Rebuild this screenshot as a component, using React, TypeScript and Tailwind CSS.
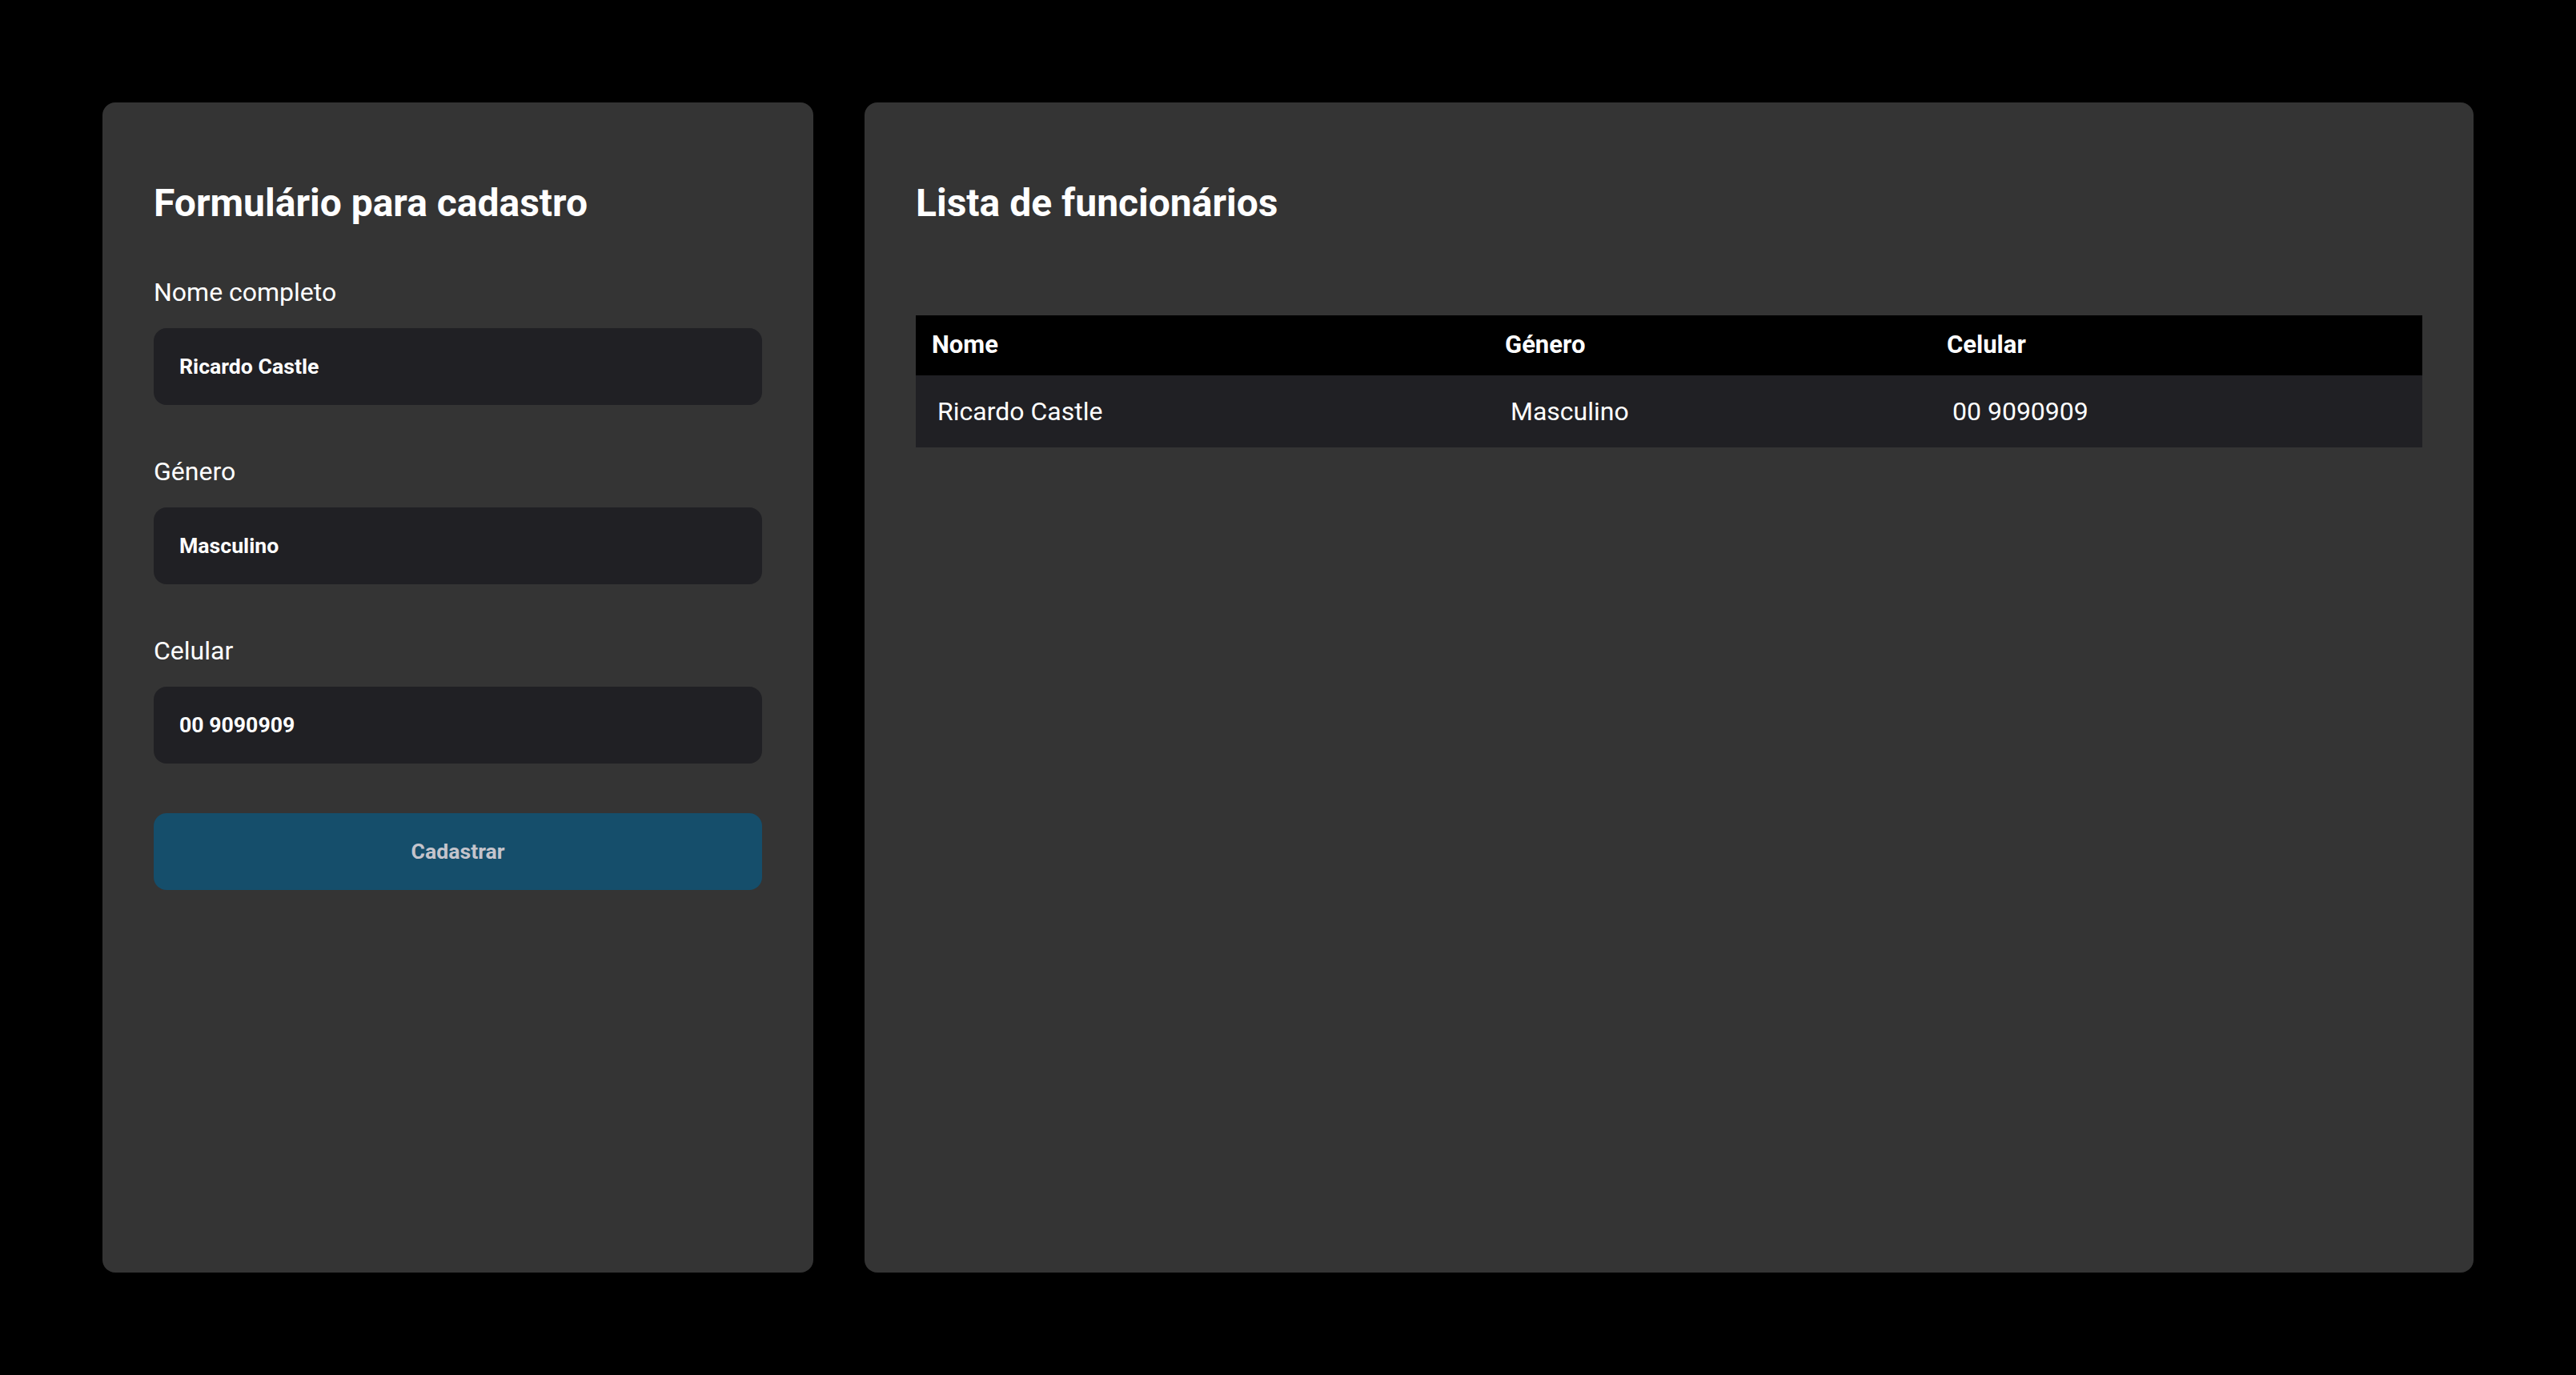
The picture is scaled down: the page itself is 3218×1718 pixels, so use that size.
import React, { useState } from "react";

/* ── Types ─────────────────────────────────────────────────────── */

type Funcionario = {
  nome: string;
  genero: string;
  celular: string;
};

/* ── Field ─────────────────────────────────────────────────────── */

const Field = ({
  label,
  value,
  onChange,
}: {
  label: string;
  value: string;
  onChange: (v: string) => void;
}): JSX.Element => (
  <label className="mt-16 flex flex-col">
    <span className="text-[32px] leading-[38px] text-white">{label}</span>
    <input
      value={value}
      onChange={(e) => onChange(e.target.value)}
      className="mt-[26px] h-[96px] w-full rounded-2xl bg-[#202024] px-8 text-[26.67px] font-bold text-white outline-none"
    />
  </label>
);

/* ── Component ─────────────────────────────────────────────────── */

const App = (): JSX.Element => {
  const [nome, setNome] = useState("Ricardo Castle");
  const [genero, setGenero] = useState("Masculino");
  const [celular, setCelular] = useState("00 9090909");
  const [lista, setLista] = useState<Funcionario[]>([
    { nome: "Ricardo Castle", genero: "Masculino", celular: "00 9090909" },
  ]);

  const handleSubmit = (e: React.FormEvent) => {
    e.preventDefault();
    if (!nome.trim()) return;
    setLista((prev) => [...prev, { nome, genero, celular }]);
  };

  return (
    <main className="flex h-screen gap-16 bg-black p-32 font-['Roboto',sans-serif]">
      {/* ── Formulário ──── */}
      <form
        onSubmit={handleSubmit}
        className="flex w-[888px] shrink-0 flex-col rounded-2xl bg-[#343434] px-16 pt-[98px]"
      >
        <h1 className="text-[48px] font-bold leading-[56px] text-white">
          Formulário para cadastro
        </h1>

        <Field label="Nome completo" value={nome} onChange={setNome} />
        <Field label="Género" value={genero} onChange={setGenero} />
        <Field label="Celular" value={celular} onChange={setCelular} />

        <button
          type="submit"
          className="mt-[62px] h-[96px] w-full rounded-2xl bg-[#154e6b] text-[26.67px] font-bold text-[#c4c4cc]"
        >
          Cadastrar
        </button>
      </form>

      {/* ── Lista ──── */}
      <section className="flex flex-1 flex-col rounded-2xl bg-[#343434] px-16 pt-[98px]">
        <h2 className="text-[48px] font-bold leading-[56px] text-white">
          Lista de funcionários
        </h2>

        <table className="mt-[112px] w-full table-fixed border-collapse text-left text-white">
          <colgroup>
            <col className="w-[716px]" />
            <col className="w-[552px]" />
            <col />
          </colgroup>
          <thead>
            <tr className="h-[75px] bg-black">
              <th className="pl-5 text-[31px] font-bold">Nome</th>
              <th className="pl-5 text-[31px] font-bold">Género</th>
              <th className="pl-5 text-[31px] font-bold">Celular</th>
            </tr>
          </thead>
          <tbody>
            {lista.map((f, i) => (
              <tr key={i} className="h-[90px] bg-[#202024]">
                <td className="pl-[27px] text-[32px]">{f.nome}</td>
                <td className="pl-[27px] text-[32px]">{f.genero}</td>
                <td className="pl-[27px] text-[32px]">{f.celular}</td>
              </tr>
            ))}
          </tbody>
        </table>
      </section>
    </main>
  );
};

export default App;
